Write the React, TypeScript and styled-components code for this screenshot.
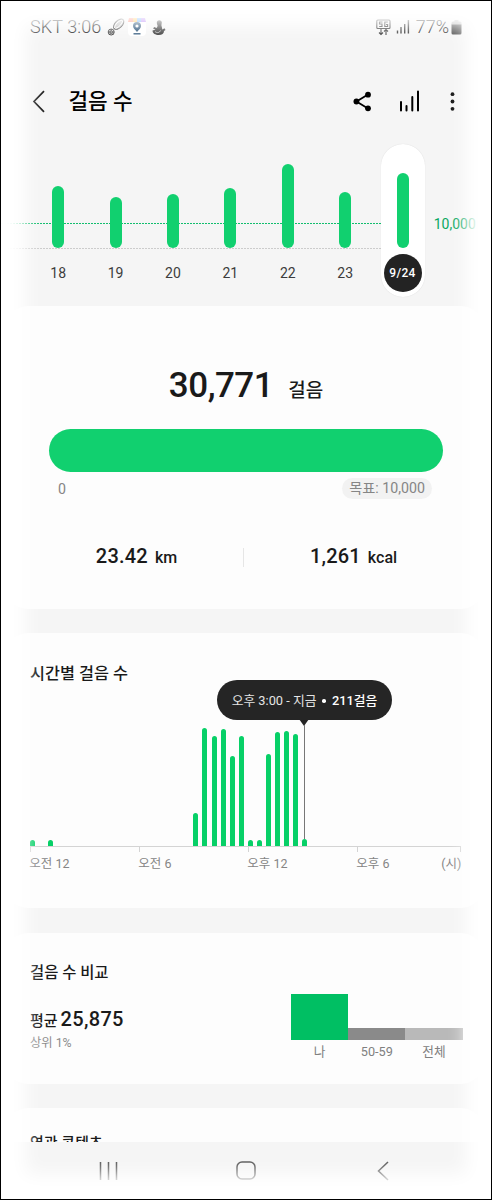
import React from "react";
import styled, { createGlobalStyle } from "styled-components";

const GlobalStyle = createGlobalStyle`
  * { box-sizing: border-box; }
  body {
    margin: 0;
    background: #fff;
    font-family: Roboto, "Noto Sans CJK KR", sans-serif;
    color: #1a1a1a;
  }
`;

const Screen = styled.main`
  position: relative;
  display: flex;
  flex-direction: column;
  width: 492px;
  height: 1200px;
  overflow: hidden;
  border: 1px solid #000;
  background: #f5f5f5;
`;

const EdgeFade = styled.div`
  position: absolute;
  inset: 0;
  pointer-events: none;
  box-shadow: inset 0 0 18px 25px #fff;
`;

const StatusBar = styled.header`
  display: flex;
  align-items: center;
  height: 52px;
  padding: 0 29px;
  color: #222;
  font-size: 18px;
  font-weight: 300;
  line-height: 20px;
`;

const StatusText = styled.span<{ $spacing?: number }>`
  letter-spacing: ${(p) => p.$spacing ?? 0}px;
`;

const StatusIcons = styled.div`
  display: flex;
  align-items: center;
  gap: 3px;
  margin-left: 6px;
`;

const StatusRight = styled.div`
  display: flex;
  align-items: center;
  margin-left: auto;
`;

const TitleBar = styled.div`
  display: flex;
  align-items: center;
  height: 96px;
  padding: 0 36.5px 0 31px;
`;

const Title = styled.h1`
  margin: 1px auto 0 23.5px;
  font-size: 21.3px;
  font-weight: 500;
  line-height: 28px;
  color: #000;
`;

const Actions = styled.div`
  display: flex;
  align-items: center;
`;

const DayChart = styled.section`
  flex: none;
  display: flex;
  height: 163px;
  margin-top: -6px;
  background:
    repeating-linear-gradient(90deg, #12bd6e 0 2px, transparent 2px 3px) 0 80px / 380px 1px no-repeat,
    repeating-linear-gradient(90deg, #ccc 0 2px, transparent 2px 3px) 0 105px / 380px 1px no-repeat;
  padding-left: 28.5px;
`;

const Day = styled.div`
  display: flex;
  flex-direction: column;
  align-items: center;
  width: 57.4px;
`;

const DayTrack = styled.div<{ $selected?: boolean }>`
  display: flex;
  flex-direction: column;
  align-items: center;
  width: 44px;
  height: 153px;
  margin-top: 0.5px;
  border-radius: 22px;
  background: ${(p) => (p.$selected ? "#fff" : "transparent")};
  box-shadow: ${(p) => (p.$selected ? "0 0 1px rgba(0,0,0,.15)" : "none")};
`;

const DayBar = styled.div`
  width: 12px;
  border-radius: 6px;
  background: #11d06f;
`;

const DayBarArea = styled.div`
  display: flex;
  align-items: flex-end;
  height: 104px;
`;

const DayLabel = styled.div<{ $selected?: boolean }>`
  display: flex;
  align-items: center;
  justify-content: center;
  width: 38px;
  height: 38px;
  margin-top: 6px;
  border-radius: 50%;
  background: ${(p) => (p.$selected ? "#232323" : "transparent")};
  color: ${(p) => (p.$selected ? "#fff" : "#3c3c3c")};
  font-size: ${(p) => (p.$selected ? 12 : 14)}px;
  font-weight: ${(p) => (p.$selected ? 500 : 400)};
  letter-spacing: ${(p) => (p.$selected ? 0.3 : 0)}px;
`;

const GoalLabel = styled.div`
  margin: 73px 0 0 2.5px;
  font-size: 14px;
  line-height: 16px;
  color: #0aa861;
`;

const Card = styled.section<{ $height: number; $gap?: number }>`
  flex: none;
  height: ${(p) => p.$height}px;
  margin: 0 8px ${(p) => p.$gap ?? 0}px 5px;
  padding: 0 4px 0 7px;
  border-radius: 22px;
  background: #fdfdfd;
`;

const TotalRow = styled.div`
  display: flex;
  align-items: baseline;
  justify-content: center;
  gap: 15px;
  padding-top: 57px;
  line-height: 46px;
`;

const Total = styled.span`
  font-size: 35px;
  font-weight: 500;
  letter-spacing: -0.5px;
`;

const TotalUnit = styled.span`
  font-size: 19px;
  font-weight: 500;
`;

const Progress = styled.div`
  height: 43px;
  margin: 15px 36px 0 35.5px;
  border-radius: 22px;
  background: #11d06f;
`;

const Scale = styled.div`
  display: flex;
  justify-content: space-between;
  align-items: center;
  height: 21px;
  margin: 6px 47px 0 45px;
  font-size: 14.2px;
  color: #858585;
`;

const GoalChip = styled.span`
  height: 21px;
  padding: 0 7px;
  border-radius: 11px;
  background: #f2f2f2;
  line-height: 21px;
`;

const Metrics = styled.div`
  display: flex;
  align-items: center;
  height: 24px;
  margin-top: 46px;
  padding: 0 19px 0 17px;
`;

const Metric = styled.div`
  flex: 1;
  text-align: center;
  font-size: 20px;
  font-weight: 500;
  line-height: 24px;
  letter-spacing: 0.2px;
`;

const MetricUnit = styled.span`
  margin-left: 7px;
  font-size: 16px;
  letter-spacing: 0;
`;

const MetricDivider = styled.div`
  width: 1px;
  height: 19px;
  margin-right: 3px;
  background: #e6e6e6;
`;

const CardTitle = styled.h2<{ $top: number; $size: number }>`
  margin: 0;
  padding: ${(p) => p.$top}px 0 0 17px;
  font-size: ${(p) => p.$size}px;
  font-weight: 500;
  line-height: 24px;
`;

const HourChart = styled.div`
  position: relative;
  margin: 41px 18px 0 17px;
`;

const HourBars = styled.div`
  display: flex;
  align-items: flex-end;
  height: 119px;
`;

const HourSlot = styled.div`
  flex: none;
  width: 9.08px;
`;

const HourBar = styled.div`
  width: 5px;
  border-radius: 2.5px 2.5px 0 0;
  background: #07d067;
`;

const Axis = styled.div`
  display: flex;
  height: 6px;
  border-top: 1px solid #d4d4d4;
  border-right: 1px solid #d4d4d4;
`;

const AxisSpan = styled.div`
  flex: none;
  width: 109px;
  height: 5px;
  border-left: 1px solid #d4d4d4;
  &:last-child { width: 100px; }
`;

const AxisLabels = styled.div`
  display: flex;
  margin-top: 3px;
  font-size: 12.5px;
  line-height: 18px;
  color: #858585;
`;

const AxisLabel = styled.span<{ $last?: boolean }>`
  flex: none;
  width: ${(p) => (p.$last ? "auto" : "109px")};
  margin-left: ${(p) => (p.$last ? "-24px" : "0")};
  text-indent: -0.7px;
  white-space: nowrap;
`;

const Tooltip = styled.div`
  position: absolute;
  left: 187px;
  top: -47px;
  display: flex;
  align-items: center;
  justify-content: center;
  width: 175px;
  height: 40px;
  padding-top: 2px;
  border-radius: 20px;
  background: #252525;
  color: #e4e4e4;
  font-size: 12.8px;
  line-height: 20px;
  white-space: pre;
  &::before {
    content: "";
    position: absolute;
    left: 82px;
    top: 39px;
    border: 5.5px solid transparent;
    border-top: 7px solid #252525;
    border-bottom: 0;
  }
  &::after {
    content: "";
    position: absolute;
    left: 87px;
    top: 45px;
    width: 1px;
    height: 114px;
    background: #777;
  }
`;

const TooltipDot = styled.span`
  width: 3.5px;
  height: 3.5px;
  margin: 0 6px;
  border-radius: 50%;
  background: #fff;
`;

const TooltipValue = styled.b`
  font-weight: 500;
  color: #fff;
`;

const Comparison = styled.div`
  display: flex;
  justify-content: space-between;
  margin: 9px 16.4px 0 17px;
`;

const Average = styled.div`
  display: flex;
  align-items: baseline;
  gap: 3px;
  margin-top: 13px;
  font-size: 15px;
  font-weight: 500;
  line-height: 24px;
`;

const AverageValue = styled.span`
  font-size: 20px;
  letter-spacing: 0.3px;
`;

const Rank = styled.div`
  font-size: 12.3px;
  line-height: 20px;
  color: #8c8c8c;
`;

const Groups = styled.div`
  display: flex;
  align-items: flex-end;
  height: 70px;
`;

const Group = styled.div`
  width: 57.2px;
  text-align: center;
  font-size: 12.7px;
  line-height: 24px;
  color: #808080;
`;

const GroupBar = styled.div<{ $height: number; $color: string }>`
  height: ${(p) => p.$height}px;
  background: ${(p) => p.$color};
`;

const CutCard = styled.section`
  flex: none;
  height: 34px;
  margin: 0 8px 0 5px;
  padding-left: 7px;
  overflow: hidden;
  border-radius: 22px 22px 0 0;
  background: #fdfdfd;
`;

const NavBar = styled.nav`
  display: flex;
  align-items: center;
  justify-content: space-between;
  height: 57px;
  padding: 0 102px 0 98px;
`;

const HomeIcon = styled.svg`
  margin-right: 4px;
`;

const days = [
  { label: "18", height: 62 },
  { label: "19", height: 51 },
  { label: "20", height: 53.5 },
  { label: "21", height: 60 },
  { label: "22", height: 83.5 },
  { label: "23", height: 55.5 },
  { label: "9/24", height: 74.5, selected: true },
];

const halfHours = [
  6, 0, 6, 0, 0, 0, 0, 0, 0, 0, 0, 0, 0, 0, 0, 0, 0, 0,
  33, 118.5, 110, 117.5, 90, 110, 6, 6, 92.5, 114, 115, 112, 7,
];

const groups = [
  { label: "나", height: 46, color: "#00bf63" },
  { label: "50-59", height: 12, color: "#8a8a8a" },
  { label: "전체", height: 12, color: "#b9b9b9" },
];

const BadmintonIcon = () => (
  <svg width="18" height="18" viewBox="0 0 18 18" fill="none" stroke="#333" strokeWidth="1">
    <ellipse cx="11.700" cy="6.200" rx="6.300" ry="3.600" transform="rotate(-45 11.7 6.2)" fill="#bbb" />
    <path d="M7.500 10C8 6 11 3 15.500 2M8.500 10.500C12 9.500 15 6 16 2.500" stroke="#fff" />
    <circle cx="4.200" cy="14" r="3" fill="#ddd" />
    <circle cx="4.200" cy="14" r="1.200" />
    <path d="M4.200 11v1.500M1.300 14h1.700M5.400 14h1.700M2.400 16.400l1-1M6 16.400l-1-1" />
  </svg>
);

const MapPinIcon = () => (
  <svg width="18" height="18" viewBox="0 0 18 18">
    <rect width="18" height="18" rx="4" fill="#fff" />
    <path d="M1 0h4v4H0z" fill="#ff735c" />
    <path d="M5 0h4v4H5z" fill="#ffb632" />
    <path d="M9 0h4v4H9z" fill="#499dff" />
    <path d="M13 0h4l1 4h-5z" fill="#a463f2" />
    <path d="M9 14C7 11.500 5 10.400 5 8a4 4 0 0 1 8 0c0 2.400-2 3.500-4 6z" fill="#16436c" />
    <circle cx="9" cy="8" r="1.600" fill="#fff" />
    <path d="M5.500 15.800h7" stroke="#16436c" strokeWidth="1.300" />
  </svg>
);

const SealIcon = () => (
  <svg width="14" height="17" viewBox="0 0 14 17" fill="#333">
    <circle cx="7.300" cy="3.800" r="2.500" />
    <path d="M5.300 5C5.800 7 5.500 8 4.500 9L2.300 8 1 9.500 3.500 10.500 .5 11.500c0 3 3 4.500 6.300 4.500 3.200 0 5.200-1.500 5.200-4l1.500-1-1-1.800-2.200 1.300C10 8 9.300 7 9.300 5z" />
    <path d="M3 12.500c2 1.800 4.500 1.300 5.500-1" stroke="#ddd" strokeWidth=".8" fill="none" />
  </svg>
);

const NetworkIcon = () => (
  <svg width="15" height="17" viewBox="0 0 15 17" fill="none" stroke="#333" strokeWidth="1.100">
    <rect x=".8" y="1" width="13.200" height="8.500" rx="1" />
    <path d="M6.500 3H3.500v2h2.500v2.500H3.200M11.800 3H8.800v4.500h2.800V5.500H10" />
    <path d="M5 10v5.500M3 13.500l2 2 2-2M10 16v-5.500M8 12.500l2-2 2 2" />
  </svg>
);

const SignalIcon = () => (
  <svg width="14" height="14" viewBox="0 0 14 14" stroke="#333" strokeWidth="1.400">
    <path d="M1.500 13.500v-3M5 13.500V7M8.700 13.500V4M12.400 13.500V0" />
  </svg>
);

const BatteryIcon = () => (
  <svg width="11" height="15" viewBox="0 0 11 15">
    <path d="M3.500 0h4v1.500H9a1.500 1.500 0 0 1 1.500 1.500V5H.5V3A1.500 1.500 0 0 1 2 1.500h1.500z" fill="#bbb" />
    <path d="M.5 4.500h10v8.500A1.500 1.500 0 0 1 9 14.500H2A1.500 1.500 0 0 1 .5 13z" fill="#444" />
  </svg>
);

const BackIcon = () => (
  <svg width="13" height="23" viewBox="0 0 13 23" fill="none" stroke="#222" strokeWidth="1.700">
    <path d="M12 1.200 2 11.500 12 21.800" />
  </svg>
);

const ShareIcon = () => (
  <svg width="19" height="21" viewBox="0 0 19 21" fill="#000">
    <path d="M15 3.500 3.500 10.500 15 17.500" fill="none" stroke="#000" strokeWidth="1.800" />
    <circle cx="15" cy="3.700" r="2.900" />
    <circle cx="3.400" cy="10.500" r="2.900" />
    <circle cx="15" cy="17.300" r="2.900" />
  </svg>
);

const ChartIcon = () => (
  <svg width="21" height="22" viewBox="0 0 21 22" stroke="#000" strokeWidth="2" strokeLinecap="round">
    <path d="M2 20.500V12M7.500 20.500v-4.500M13.300 20.500V7M19 20.500V1.500" />
  </svg>
);

const MoreIcon = () => (
  <svg width="5" height="19" viewBox="0 0 5 19" fill="#111">
    <circle cx="2.500" cy="2.200" r="1.900" />
    <circle cx="2.500" cy="9.500" r="1.900" />
    <circle cx="2.500" cy="16.800" r="1.900" />
  </svg>
);

const IconGap = styled.span<{ $width: number }>`
  width: ${(p) => p.$width}px;
`;

export default function App() {
  return (
    <Screen>
      <GlobalStyle />
      <StatusBar>
        <StatusText $spacing={0.1}>SKT 3:06</StatusText>
        <StatusIcons>
          <BadmintonIcon />
          <MapPinIcon />
          <IconGap $width={0} />
          <SealIcon />
        </StatusIcons>
        <StatusRight>
          <NetworkIcon />
          <IconGap $width={5} />
          <SignalIcon />
          <IconGap $width={6} />
          <StatusText>77%</StatusText>
          <IconGap $width={2} />
          <BatteryIcon />
        </StatusRight>
      </StatusBar>

      <TitleBar>
        <BackIcon />
        <Title>걸음 수</Title>
        <Actions>
          <ShareIcon />
          <IconGap $width={26.5} />
          <ChartIcon />
          <IconGap $width={30} />
          <MoreIcon />
        </Actions>
      </TitleBar>

      <DayChart>
        {days.map((d) => (
          <Day key={d.label}>
            <DayTrack $selected={d.selected}>
              <DayBarArea>
                <DayBar style={{ height: d.height }} />
              </DayBarArea>
              <DayLabel $selected={d.selected}>{d.label}</DayLabel>
            </DayTrack>
          </Day>
        ))}
        <GoalLabel>10,000</GoalLabel>
      </DayChart>

      <Card $height={303} $gap={24}>
        <TotalRow>
          <Total>30,771</Total>
          <TotalUnit>걸음</TotalUnit>
        </TotalRow>
        <Progress />
        <Scale>
          <span>0</span>
          <GoalChip>목표: 10,000</GoalChip>
        </Scale>
        <Metrics>
          <Metric>
            23.42<MetricUnit>km</MetricUnit>
          </Metric>
          <MetricDivider />
          <Metric>
            1,261<MetricUnit>kcal</MetricUnit>
          </Metric>
        </Metrics>
      </Card>

      <Card $height={275} $gap={25}>
        <CardTitle $top={29} $size={16.3}>시간별 걸음 수</CardTitle>
        <HourChart>
          <HourBars>
            {halfHours.map((height, i) => (
              <HourSlot key={i}>
                <HourBar style={{ height }} />
              </HourSlot>
            ))}
          </HourBars>
          <Axis>
            <AxisSpan />
            <AxisSpan />
            <AxisSpan />
            <AxisSpan />
          </Axis>
          <AxisLabels>
            <AxisLabel>오전 12</AxisLabel>
            <AxisLabel>오전 6</AxisLabel>
            <AxisLabel>오후 12</AxisLabel>
            <AxisLabel>오후 6</AxisLabel>
            <AxisLabel $last>(시)</AxisLabel>
          </AxisLabels>
          <Tooltip>
            오후 3:00 - 지금<TooltipDot />
            <TooltipValue>211걸음</TooltipValue>
          </Tooltip>
        </HourChart>
      </Card>

      <Card $height={151} $gap={24}>
        <CardTitle $top={28} $size={15.4}>걸음 수 비교</CardTitle>
        <Comparison>
          <div>
            <Average>
              평균<AverageValue>25,875</AverageValue>
            </Average>
            <Rank>상위 1%</Rank>
          </div>
          <Groups>
            {groups.map((g) => (
              <Group key={g.label}>
                <GroupBar $height={g.height} $color={g.color} />
                {g.label}
              </Group>
            ))}
          </Groups>
        </Comparison>
      </Card>

      <CutCard>
        <CardTitle $top={23} $size={15}>연관 콘텐츠</CardTitle>
      </CutCard>

      <NavBar>
        <svg width="19" height="18" viewBox="0 0 19 18" stroke="#555" strokeWidth="1.500">
          <path d="M1.500 0v18M9.500 0v18M17.500 0v18" />
        </svg>
        <HomeIcon width="20" height="19" viewBox="0 0 20 19" fill="none" stroke="#555" strokeWidth="1.500">
          <rect x="1" y="1" width="18" height="17" rx="5" />
        </HomeIcon>
        <svg width="12" height="20" viewBox="0 0 12 20" fill="none" stroke="#555" strokeWidth="1.500">
          <path d="M11 1 1.500 10 11 19" />
        </svg>
      </NavBar>
      <EdgeFade />
    </Screen>
  );
}
